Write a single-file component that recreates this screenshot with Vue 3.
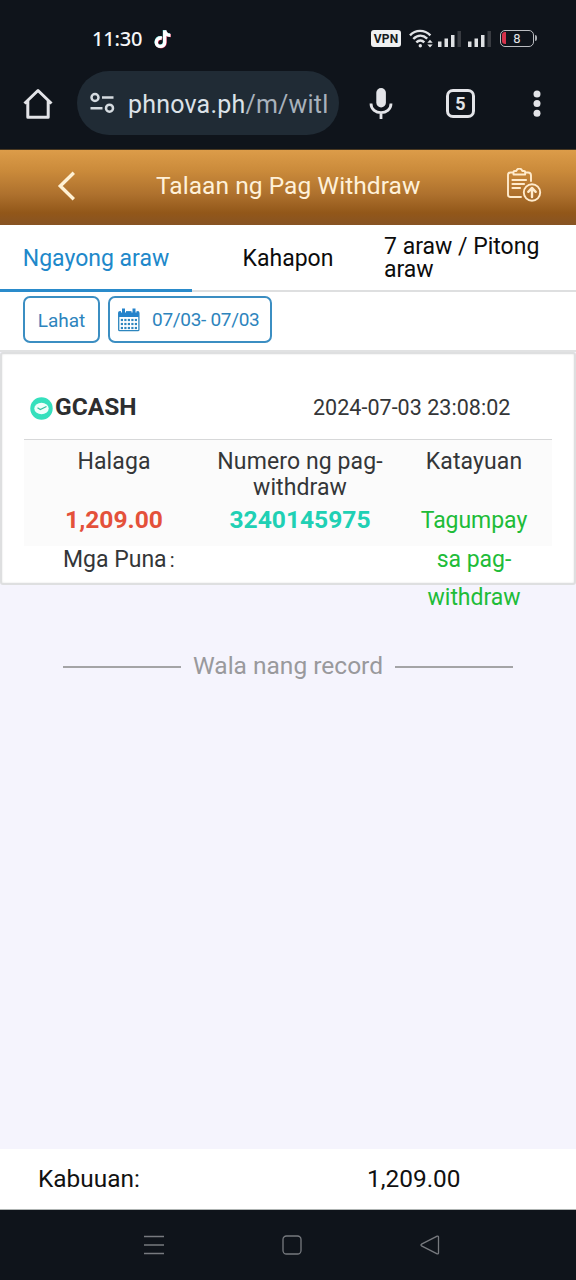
<script setup>
const tabs = [
  { label: 'Ngayong araw', cls: 'today' },
  { label: 'Kahapon', cls: 'yesterday' },
  { label: '7 araw / Pitong araw', cls: 'week' },
]
const calendarRows = [12, 16, 20]
const calendarCols = [3.9, 7.4, 10.9, 14.4, 17.9]
</script>

<template>
  <div class="screen">
    <div class="status">
      <span class="clock">11:30</span>
      <svg class="tiktok" width="18" height="20" viewBox="0 0 18 20" fill="none" stroke-width="3.3">
        <path d="M7.800 9.200C4.500 8.300 2.300 10.800 2.300 13.400c0 5.400 8.400 5.400 8.400 0V1.500c.4 3.200 2.700 4.800 5.700 4.800" stroke="#e9375e" transform="translate(.5 .4)" />
        <path d="M7.800 9.200C4.500 8.300 2.300 10.800 2.300 13.400c0 5.400 8.400 5.400 8.400 0V1.500c.4 3.200 2.700 4.800 5.700 4.800" stroke="#5cdcdd" transform="translate(-.3 -.4)" />
        <path d="M7.800 9.200C4.500 8.300 2.300 10.800 2.300 13.400c0 5.400 8.400 5.400 8.400 0V1.500c.4 3.200 2.700 4.800 5.700 4.800" stroke="#fff" />
      </svg>
      <span class="vpn">VPN</span>
      <svg class="wifi" width="24" height="20" viewBox="0 0 24 20" fill="none" stroke="#e1e3e6" stroke-width="2.400">
        <path d="M1 6.400C6.500 .4 15.500 .4 21.400 6.400M4.300 10C8.600 5.600 14 5.600 18.200 9.600M7.300 13.400c2.700-2.600 5.500-2.600 8 0" />
        <circle cx="11.300" cy="16.700" r="1.700" fill="#e1e3e6" stroke="none" />
        <path d="M18.300 13.700 21 10.700l2.700 3zM18.300 15.500l2.700 3 2.700-3z" fill="#e1e3e6" stroke="none" />
      </svg>
      <svg v-for="n in 2" :key="n" class="signal" width="24" height="18" viewBox="0 0 24 18" fill="#dfe1e4">
        <path d="M0 11.500h3.500V17H0zM6.500 8.500H10V17H6.500zM13 5h3.500v12H13z" />
        <path d="M19.500 1H23v16h-3.500z" fill="#393c42" />
      </svg>
      <div class="battery"><i></i><span>8</span></div>
    </div>

    <div class="browser">
      <svg class="home" width="30" height="32" viewBox="0 0 30 32" fill="none" stroke="#e3e4e8" stroke-width="3" stroke-linejoin="round">
        <path d="M1.500 15.500 15 2.500l13.500 13M4.800 13v16.200h20.400V13" />
      </svg>
      <div class="address">
        <svg width="26" height="22" viewBox="0 0 26 22" fill="none" stroke="#d5dbe0" stroke-width="2.500">
          <circle cx="5" cy="5.500" r="3.500" /><path d="M12 5.500h11.500M.5 16.200h12" /><circle cx="19.500" cy="16.200" r="3.500" />
        </svg>
        <span class="url">phnova.ph<em>/m/witl</em></span>
      </div>
      <svg class="mic" width="24" height="32" viewBox="0 0 24 32" fill="none" stroke="#e3e4e8" stroke-width="2.800">
        <rect x="7.300" y="0" width="9.600" height="19.500" rx="4.800" fill="#e3e4e8" stroke="none" />
        <path d="M2 15.500c0 12.200 20 12.200 20 0M12 24v7" />
      </svg>
      <div class="tabcount">5</div>
      <svg class="dots" width="8" height="28" viewBox="0 0 8 28" fill="#e3e4e8">
        <circle cx="4" cy="4" r="3.500" /><circle cx="4" cy="13.600" r="3.500" /><circle cx="4" cy="23.200" r="3.500" />
      </svg>
    </div>

    <header class="header">
      <svg class="back" width="20" height="30" viewBox="0 0 20 30" fill="none" stroke="#fff1d4" stroke-width="3.400">
        <path d="M17.800 1.800 4.300 15l13.500 13.200" />
      </svg>
      <h1>Talaan ng Pag Withdraw</h1>
      <svg class="report" width="36" height="36" viewBox="0 0 36 36" fill="none" stroke="#ffebcc" stroke-width="1.900" stroke-linecap="round" stroke-linejoin="round">
        <path d="M7 4.500H4.500Q2 4.500 2 7v19.500Q2 29 4.500 29H15M19.500 4.500H22Q25 4.500 25 7.500V13" />
        <path d="M7.500 6.500V4q0-1 1.200-1h1.600c1-3.200 5-3.200 6 0H18q1.200 0 1.200 1v2.500z" />
        <path d="M6.500 12H20M6.500 16H18M6.500 20H14" stroke-width="2.200" />
        <circle cx="26" cy="24.500" r="8.200" />
        <path d="M26 29v-8M22.300 23.800l3.700-3.900 3.700 3.900" stroke-width="2.400" />
      </svg>
    </header>

    <nav class="tabs">
      <div v-for="t in tabs" :key="t.cls" class="tab" :class="t.cls"><span>{{ t.label }}</span></div>
    </nav>

    <div class="filters">
      <button class="all">Lahat</button>
      <button class="dates">
        <svg width="22" height="24" viewBox="0 0 22 24" fill="none" stroke="#2d86be">
          <rect x=".7" y="4" width="20.200" height="18.700" rx="1" stroke-width="1.300" />
          <path d="M.7 3.500h20.200V9H.7z" fill="#2583cb" stroke="none" />
          <path d="M5.500 .5v4M16 .5v4" stroke="#fff" stroke-width="5" />
          <path d="M5.500 .5v5M16 .5v5" stroke="#2583cb" stroke-width="3" />
          <template v-for="y in calendarRows" :key="y">
            <rect v-for="x in calendarCols" :key="x" :x="x - 1.1" :y="y - 1.1" width="2.200" height="2.200" fill="#2d86be" stroke="none" />
          </template>
        </svg>
        <span>07/03- 07/03</span>
      </button>
    </div>

    <section class="card">
      <div class="cardhead">
        <svg width="23" height="23" viewBox="0 0 23 23" fill="none">
          <circle cx="11.500" cy="11.500" r="11.200" fill="#35e0bd" />
          <ellipse cx="11.500" cy="11.500" rx="7.200" ry="5.800" fill="#effffb" />
          <path d="m7.500 10.800 2.800 1.700 6.200-3" stroke="#35bfa1" stroke-width="1.300" />
        </svg>
        <strong>GCASH</strong>
        <time>2024-07-03 23:08:02</time>
      </div>
      <div class="details">
        <div class="cell amount"><div class="label">Halaga</div><b>1,209.00</b></div>
        <div class="cell number"><div class="label">Numero ng pag-<br>withdraw</div><b>3240145975</b></div>
        <div class="cell state"><div class="label">Katayuan</div><p>Tagumpay<br>sa pag-<br>withdraw</p></div>
      </div>
      <div class="remarks">Mga Puna<span>:</span></div>
    </section>

    <main class="empty"><i></i><span>Wala nang record</span><i></i></main>

    <footer class="total"><span class="totallabel">Kabuuan:</span><span class="sum">1,209.00</span></footer>

    <div class="system">
      <svg width="20" height="20" viewBox="0 0 20 20" fill="none" stroke="#777a7f" stroke-width="1.300"><path d="M0 1.500h20M0 10h20M0 18.500h20" /></svg>
      <svg width="20" height="20" viewBox="0 0 20 20" fill="none" stroke="#777a7f" stroke-width="1.300"><rect x="1" y="1" width="18" height="18" rx="3.500" /></svg>
      <svg width="20" height="20" viewBox="0 0 20 20" fill="none" stroke="#777a7f" stroke-width="1.300" stroke-linejoin="round"><path d="M17.200 1.200 1.500 9.200q-1 .8 0 1.600l15.700 8q1.300.4 1.300-1V2.200q0-1.400-1.300-1z" /></svg>
    </div>
  </div>
</template>

<style>
body { margin: 0; background: #0f141b; }
</style>

<style scoped>
* { box-sizing: border-box; }
.screen { width: 576px; height: 1280px; overflow: hidden; display: flex; flex-direction: column; background: #f5f4fd; font-family: Roboto, "Noto Sans", sans-serif; color: #111; }
.screen > * { flex-shrink: 0; }
svg { display: block; flex: none; }
span, strong, time, h1, b, p { white-space: nowrap; }
.status { height: 71px; background: #0f141b; display: flex; align-items: center; padding: 6px 0 0 92px; }
.clock { width: 62px; font: 500 20px/24px "Noto Sans", sans-serif; color: #f6f7f8; letter-spacing: -.2px; }
.vpn { width: 30px; height: 17px; margin-left: 199px; border-radius: 3px; background: #f0f1f2; color: #171b20; font: 700 12px/18px Roboto, sans-serif; text-align: center; letter-spacing: .2px; }
.wifi { margin-left: 8px; }
.signal { margin: 1px 0 0 5px; }
.signal + .signal { margin-left: 6px; }
.battery { position: relative; width: 34px; height: 17px; margin-left: 8px; border: 1.500px solid #bbbdc1; border-radius: 5px; color: #e5e6e8; font-size: 13px; line-height: 16px; text-align: center; }
.battery::after { content: ""; position: absolute; right: -4px; top: 4px; width: 2px; height: 6px; background: #aaadb1; border-radius: 0 2px 2px 0; }
.battery i { position: absolute; left: 1px; top: 1px; width: 4px; height: 12px; border-radius: 3px 0 0 3px; background: #d5324a; }
.browser { height: 79px; padding: 0 0 14px 23px; background: #0f141b; display: flex; align-items: center; border-bottom: 1px solid #493821; }
.home, .mic, .tabcount, .dots { margin-top: 1px; }
.address { width: 262px; height: 64px; margin-left: 24px; border-radius: 32px; background: #202b35; padding-left: 13px; display: flex; align-items: center; }
.url { width: 199px; overflow: hidden; margin: 3px 0 0 12px; font-size: 25px; line-height: 32px; letter-spacing: .2px; color: #dce2e8; }
.url em { font-style: normal; color: #a8b1bb; }
.mic { margin-left: 30px; }
.tabcount { width: 29px; height: 29px; margin-left: 53px; border: 3px solid #e3e4e8; border-radius: 7px; color: #e3e4e8; font: 700 18px/23px Roboto, sans-serif; text-align: center; }
.dots { margin-left: 58px; }
.header { height: 75px; display: flex; align-items: center; padding: 0 34px 3px 56px; background: linear-gradient(#dc9c49 0%, #cb8b3b 27%, #ad702d 60%, #925719 84%, #875323 100%); }
.back { width: 20px; }
h1 { margin: 0 0 0 80px; width: 270px; font-weight: 400; font-size: 24.500px; line-height: 30px; color: #fff1d9; letter-spacing: .05px; }
.report { margin: -1px 0 0 81px; }
.tabs { height: 67px; display: grid; grid-template-columns: repeat(3, 1fr); background: #fff; }
.tab { display: flex; align-items: center; justify-content: center; border-bottom: 2px solid #dedfe0; font-size: 23px; color: #0c0c0c; }
.today { border-bottom: 3px solid #2a8bcb; color: #2088ca; }
.today, .yesterday { padding-top: 2px; }
.week span { white-space: normal; line-height: 23px; width: 192px; }
.filters { height: 60px; padding: 4px 23px; display: flex; gap: 8px; background: #fff; border-bottom: 2px solid #e1e2e3; }
button { height: 47px; border: 2px solid #3b8ec2; border-radius: 7px; background: #fff; color: #2d84bd; font: 400 19px/22px Roboto, sans-serif; padding: 0; white-space: nowrap; }
.all { width: 77px; padding-top: 2px; }
.dates { width: 164px; display: flex; align-items: center; padding: 0 0 0 8px; }
.dates span { margin-left: 12px; letter-spacing: -.3px; }
.card { height: 233px; border: 2px solid #dedfe0; border-radius: 3px; background: #fff; padding: 0 22px; color: #343638; box-shadow: inset 0 0 2px #ddd; }
.cardhead { height: 86px; padding-top: 23px; display: flex; align-items: center; border-bottom: 1.500px solid #d7d8d9; padding-left: 6px; }
.cardhead strong { width: 258px; margin: -3px 0 0 2px; font-size: 24.500px; font-weight: 700; color: #2d2e30; }
time { margin-top: -2px; font-size: 21.500px; letter-spacing: .03px; }
.details { height: 106px; display: grid; grid-template-columns: 180px 192px 156px; background: #fbfbfb; text-align: center; }
.label { height: 61px; padding-top: 9px; font-size: 23px; line-height: 26px; letter-spacing: .1px; white-space: nowrap; }
.cell b { display: block; font-size: 24.600px; line-height: 38px; font-weight: 700; }
.amount b { color: #e4513a; }
.number b { color: #20d0b4; }
.state p { margin: 0; padding-top: 1px; font-size: 23px; line-height: 38.500px; color: #20bc38; letter-spacing: -.05px; }
.remarks { padding-left: 39px; font-size: 23px; line-height: 28px; }
.remarks span { margin-left: 3px; font-size: 20px; }
.empty { flex: 1 1 0 !important; padding-top: 65px; display: flex; align-items: flex-start; justify-content: center; font-size: 24.500px; line-height: 32px; color: #99999c; }
.empty i { width: 118px; height: 2px; margin-top: 16px; background: #a4a4a6; }
.empty span { margin: 0 12px; }
.total { height: 61px; background: #fff; display: flex; align-items: center; padding: 0 0 2px 38px; font-size: 24.400px; border-bottom: 1px solid #aeb3b2; }
.totallabel { width: 329px; }
.system { height: 70px; background: #0f141b; display: flex; align-items: center; padding-left: 144px; gap: 118px; }
</style>
